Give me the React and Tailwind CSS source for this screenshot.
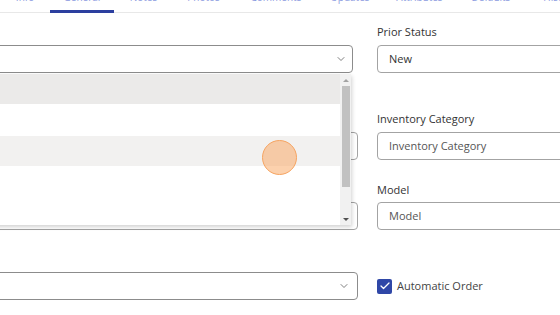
import { ChevronDown, Check } from 'lucide-react'

const tabs = [
  { label: 'Info', w: 'w-[50px]' },
  { label: 'General', w: 'w-[64px]', active: true },
  { label: 'Notes', w: 'w-[59px]' },
  { label: 'Photos', w: 'w-[61px]' },
  { label: 'Comments', w: 'w-[84px]' },
  { label: 'Updates', w: 'w-[64px]' },
  { label: 'Attributes', w: 'w-[75px]' },
  { label: 'Defaults', w: 'w-[68px]' },
  { label: 'History', w: 'w-[70px]' },
]

function Field({ label, children, className = '' }) {
  return (
    <div className={className}>
      {label && <div className="h-[14px] mb-[6px] text-[11px] leading-[14px] text-[#333]">{label}</div>}
      {children}
    </div>
  )
}

function TextBox({ value, placeholder }) {
  return (
    <div className="h-[28px] w-[200px] rounded-[4px] border border-[#a3a3a3] bg-white flex items-center px-[11px] text-[11px]">
      {value ? <span className="text-[#333]">{value}</span> : <span className="text-[#555]">{placeholder}</span>}
    </div>
  )
}

export default function App() {
  return (
    <div className="w-[560px] h-[315px] overflow-hidden bg-white relative" style={{ fontFamily: '"Open Sans", "Noto Sans", sans-serif' }}>
      {/* Tabs */}
      <div className="h-[13px] flex flex-col border-b border-[#e8e8e8]">
        <div className="flex -mt-[10px] whitespace-nowrap">
          {tabs.map((t) => (
            <div
              key={t.label}
              className={`${t.w} shrink-0 h-[23px] flex justify-center text-[10px] leading-[14px] text-[#8c9be0] ${
                t.active ? 'border-b-[3px] border-[#2c3f9f]' : ''
              }`}
            >
              {t.label}
            </div>
          ))}
        </div>
      </div>

      {/* Form */}
      <div className="grid grid-cols-[358px_1fr] gap-x-[19px] pt-[12px]">
        {/* Row 1 */}
        <Field className="-ml-[8px] pt-[20px]">
          <div className="relative">
            <div className="h-[28px] w-[361px] rounded-[4px] border border-[#8c8c8c] bg-white flex items-center justify-end pr-[5px]">
              <ChevronDown className="w-[12px] h-[12px] text-[#555]" strokeWidth={1.5} />
            </div>
            {/* Open list */}
            <div className="absolute left-0 top-[29px] w-[359px] h-[151px] bg-white shadow-[1px_2px_4px_rgba(0,0,0,0.18)] z-10 flex">
              <div className="flex-1 flex flex-col">
                <div className="h-[30px] bg-[#ebeae9]" />
                <div className="h-[32px] bg-white" />
                <div className="h-[30px] bg-[#f2f1f0]" />
                <div className="flex-1 bg-white" />
              </div>
              <div className="w-[11px] bg-[#f1f1f1] flex flex-col items-center">
                <div className="h-[12px] flex items-center">
                  <div className="w-0 h-0 border-l-[3px] border-r-[3px] border-b-[3px] border-l-transparent border-r-transparent border-b-[#a3a3a3]" />
                </div>
                <div className="w-[8px] h-[101px] bg-[#c1c1c1]" />
                <div className="flex-1" />
                <div className="h-[12px] flex items-center">
                  <div className="w-0 h-0 border-l-[3px] border-r-[3px] border-t-[3px] border-l-transparent border-r-transparent border-t-[#505050]" />
                </div>
              </div>
            </div>
          </div>
        </Field>
        <Field label="Prior Status">
          <TextBox value="New" />
        </Field>

        {/* Row 2 */}
        <div className="-ml-[8px] pt-[59px]">
          <div className="h-[28px] w-[366px] rounded-[4px] border border-[#a3a3a3] bg-white" />
        </div>
        <Field label="Inventory Category" className="pt-[39px]">
          <TextBox placeholder="Inventory Category" />
        </Field>

        {/* Row 3 */}
        <div className="-ml-[8px] pt-[42px]">
          <div className="h-[28px] w-[366px] rounded-[4px] border border-[#a3a3a3] bg-white" />
        </div>
        <Field label="Model" className="pt-[23px]">
          <div className="-mt-[1px]">
            <TextBox placeholder="Model" />
          </div>
        </Field>

        {/* Row 4 */}
        <div className="-ml-[8px] pt-[42px]">
          <div className="h-[28px] w-[366px] rounded-[4px] border border-[#8c8c8c] bg-white flex items-center justify-end pr-[7px]">
            <ChevronDown className="w-[12px] h-[12px] text-[#555]" strokeWidth={1.5} />
          </div>
        </div>
        <div className="pt-[42px] flex items-center gap-[5px]">
          <div className="w-[15px] h-[15px] rounded-[2px] bg-[#2f47a7] flex items-center justify-center">
            <Check className="w-[12px] h-[12px] text-white" strokeWidth={2.5} />
          </div>
          <span className="text-[11px] text-[#444]">Automatic Order</span>
        </div>
      </div>

      {/* Touch indicator */}
      <div className="absolute left-[262px] top-[140px] w-[35px] h-[35px] rounded-full bg-[#f9a35c]/50 border-[1.5px] border-[#f6a461] z-20" />
    </div>
  )
}
